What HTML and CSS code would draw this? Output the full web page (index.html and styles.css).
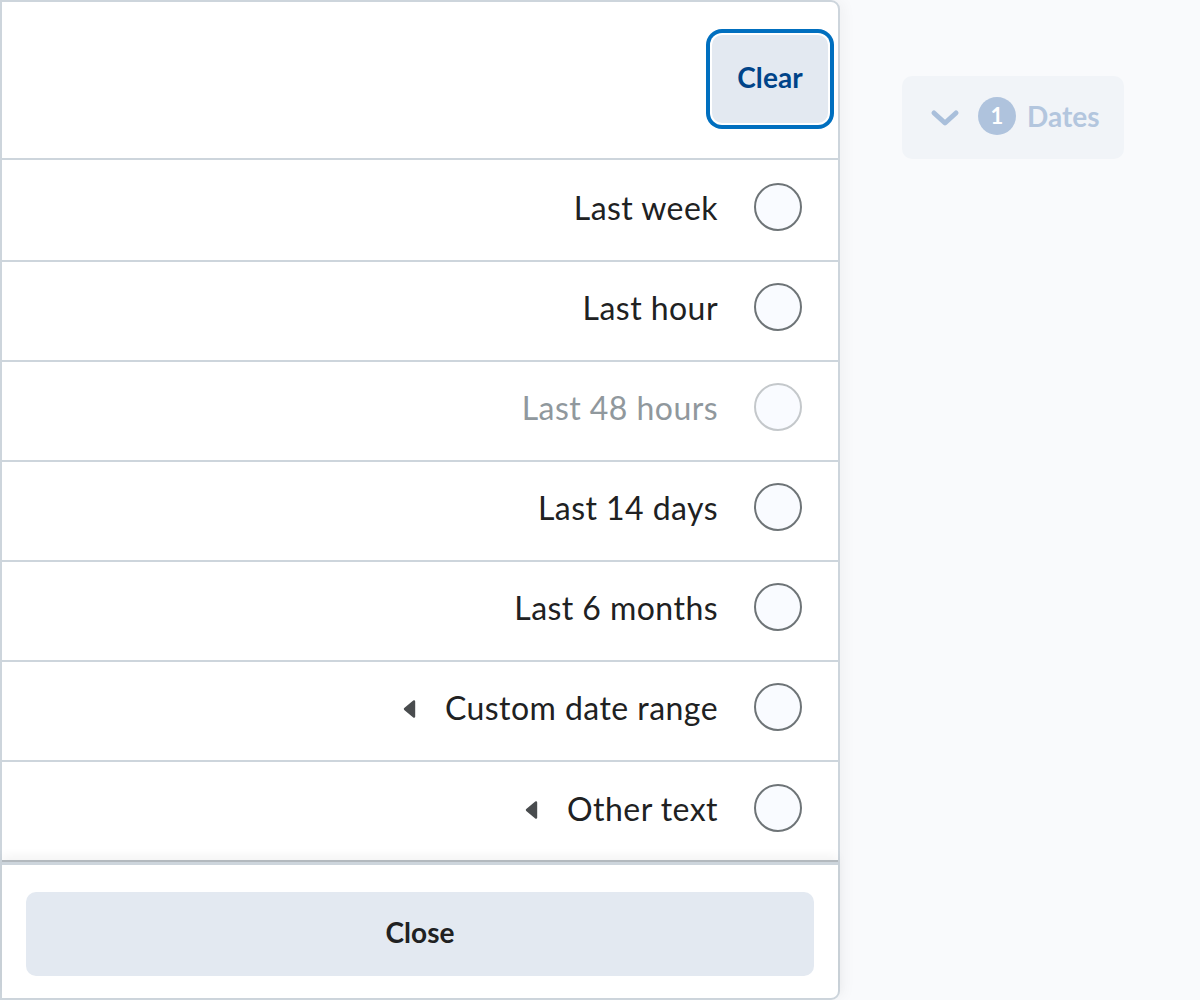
FILE: index.html
```html
<!DOCTYPE html>
<html lang="en">
<head>
<meta charset="utf-8">
<title>Date filter</title>
<link rel="stylesheet" href="styles.css">
</head>
<body>
<div class="layout">
  <div class="panel">
    <div class="header">
      <button class="btn-clear" type="button">Clear</button>
    </div>
    <div class="list">
      <div class="row"><span class="label">Last week</span><span class="radio"></span></div>
      <div class="row"><span class="label">Last hour</span><span class="radio"></span></div>
      <div class="row disabled"><span class="label">Last 48 hours</span><span class="radio"></span></div>
      <div class="row"><span class="label">Last 14 days</span><span class="radio"></span></div>
      <div class="row"><span class="label">Last 6 months</span><span class="radio"></span></div>
      <div class="row"><span class="caret"><svg width="14" height="20" viewBox="0 0 14 20"><path d="M12 2.5 L3 10 L12 17.5 Z" fill="#494c4e" stroke="#494c4e" stroke-width="2.4" stroke-linejoin="round"/></svg></span><span class="label">Custom date range</span><span class="radio"></span></div>
      <div class="row last"><span class="caret"><svg width="14" height="20" viewBox="0 0 14 20"><path d="M12 2.5 L3 10 L12 17.5 Z" fill="#494c4e" stroke="#494c4e" stroke-width="2.4" stroke-linejoin="round"/></svg></span><span class="label">Other text</span><span class="radio"></span></div>
    </div>
    <div class="footer">
      <button class="btn-close" type="button">Close</button>
    </div>
  </div>
  <div class="side">
    <div class="dates-btn">
      <svg class="chev" width="30" height="18" viewBox="0 0 30 18"><path d="M4 4 L15 14 L26 4" fill="none" stroke="#a9bfdb" stroke-width="5" stroke-linecap="round" stroke-linejoin="round"/></svg>
      <span class="badge">1</span>
      <span class="dates-text">Dates</span>
    </div>
  </div>
</div>
</body>
</html>
```

FILE: styles.css
```css
* { box-sizing: border-box; }
html, body {
  margin: 0;
  padding: 0;
  background: #f9fafc;
  font-family: Lato, "Noto Sans", sans-serif;
}
.layout {
  display: flex;
  height: 1000px;
  overflow: hidden;
}
.panel {
  width: 840px;
  height: 1000px;
  flex: none;
  display: flex;
  flex-direction: column;
  background: #fff;
  border: 2px solid #cdd5dc;
  border-radius: 0 9px 9px 0;
  box-shadow: 4px 0 14px rgba(0, 0, 0, 0.04);
}
.header {
  height: 158px;
  flex: none;
  border-bottom: 2px solid #cdd5dc;
  display: flex;
  align-items: center;
  justify-content: flex-end;
  padding-right: 10px;
}
.btn-clear {
  width: 116px;
  height: 88px;
  border: none;
  border-radius: 10px;
  background: #e3e9f1;
  color: #004489;
  font-family: Lato, sans-serif;
  font-weight: 700;
  font-size: 28px;
  letter-spacing: 0.1px;
  padding: 0 0 3px 0;
  box-shadow: 0 0 0 2px #fff, 0 0 0 6px #006fbf;
  margin-top: -3px;
}
.list {
  flex: 1;
  overflow: hidden;
  padding-top: 2px;
}
.row {
  height: 100px;
  border-bottom: 2px solid #cdd5dc;
  display: flex;
  align-items: center;
  justify-content: flex-end;
  padding: 0 36px 8px 0;
}
.row.last { border-bottom: none; }
.label {
  font-size: 32px;
  color: #202122;
  letter-spacing: 0.45px;
}
.row.disabled .label { color: #90989d; }
.radio {
  width: 48px;
  height: 48px;
  margin-left: 36px;
  border-radius: 50%;
  border: 2px solid #6e7477;
  background: #f9fbff;
  flex: none;
}
.row.disabled .radio { border-color: #c4c8cb; }
.caret {
  display: flex;
  align-items: center;
  margin-right: 29px;
  margin-top: 4px;
}
.footer {
  flex: none;
  height: 136px;
  border-top: 3px solid #cdd5dc;
  box-shadow: 0 -2px 0 #b3b9be, 0 -6px 10px rgba(0, 0, 0, 0.05);
  padding: 27px 24px 0 24px;
}
.btn-close {
  width: 100%;
  height: 84px;
  border: none;
  border-radius: 10px;
  background: #e3e9f1;
  color: #202122;
  font-family: Lato, sans-serif;
  font-weight: 700;
  font-size: 28px;
  padding: 0 0 5px 0;
}
.side {
  flex: 1;
  padding: 76px 0 0 62px;
}
.dates-btn {
  width: 222px;
  height: 83px;
  border-radius: 10px;
  background: #f1f4f8;
  display: flex;
  align-items: center;
  padding-left: 28px;
  padding-bottom: 4px;
}
.chev { flex: none; margin-top: 4px; }
.badge {
  width: 38px;
  height: 38px;
  border-radius: 50%;
  background: #afc3dd;
  color: #fff;
  font-weight: 700;
  font-size: 22px;
  display: flex;
  align-items: center;
  justify-content: center;
  margin-left: 18px;
}
.dates-text {
  margin-left: 11px;
  font-weight: 700;
  font-size: 28px;
  color: #b3c6de;
}
```
